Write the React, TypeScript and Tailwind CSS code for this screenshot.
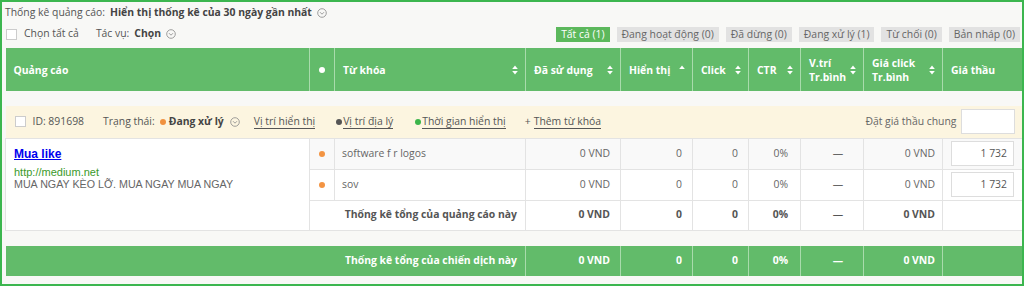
import React from "react";

const SortIcon = ({ up }: { up?: boolean }) => (
  <svg width="6" height="10" viewBox="0 0 6 10" className="shrink-0">
    <path d="M3 0.5 L5.8 4 L0.2 4 Z" fill="white" />
    {!up && <path d="M3 9.5 L5.8 6 L0.2 6 Z" fill="white" />}
  </svg>
);

const CircleDown = () => (
  <svg width="10" height="10" viewBox="0 0 10 10" className="inline-block">
    <circle cx="5" cy="5" r="4.3" fill="none" stroke="#888" strokeWidth="0.8" />
    <path d="M3 4.2 L5 6.2 L7 4.2" fill="none" stroke="#888" strokeWidth="0.8" />
  </svg>
);

const Dot = ({ color }: { color: string }) => (
  <span className={`inline-block w-[6px] h-[6px] rounded-full ${color}`} />
);

const headers: { label: React.ReactNode; sort?: "both" | "up" }[] = [
  { label: "Quảng cáo" },
  { label: <span className="block w-[6px] h-[6px] rounded-full bg-white mx-auto" /> },
  { label: "Từ khóa", sort: "both" },
  { label: "Đã sử dụng", sort: "both" },
  { label: "Hiển thị", sort: "up" },
  { label: "Click", sort: "both" },
  { label: "CTR", sort: "both" },
  { label: <>V.trí<br />Tr.bình</>, sort: "both" },
  { label: <>Giá click<br />Tr.bình</>, sort: "both" },
  { label: "Giá thầu" },
];

const widths = [304, 25, 191, 95, 72, 56, 52, 63, 79, 80];

const tabs = [
  { label: "Tất cả (1)", active: true },
  { label: "Đang hoạt động (0)" },
  { label: "Đã dừng (0)" },
  { label: "Đang xử lý (1)" },
  { label: "Từ chối (0)" },
  { label: "Bản nháp (0)" },
];

const keywords = ["software f r logos", "sov"];

export default function App() {
  return (
    <div
      className="w-[1024px] h-[286px] border-2 border-[#3cb64f] bg-[#f8f8f6] text-[10.4px] text-[#555] overflow-hidden"
      style={{ fontFamily: '"Open Sans", sans-serif' }}
    >
      {/* Top bar */}
      <div className="pl-[3px] pt-[3px] h-[18px] flex items-center gap-[5px]">
        <span>Thống kê quảng cáo:</span>
        <span className="font-bold text-[#444]">Hiển thị thống kê của 30 ngày gần nhất</span>
        <CircleDown />
      </div>
      <div className="pl-[4px] pr-[2px] h-[28px] flex items-center">
        <span className="w-[11px] h-[11px] border border-[#ccc] bg-white mr-[7px]" />
        <span>Chọn tất cả</span>
        <span className="ml-[17px]">Tác vụ:</span>
        <span className="ml-[5px] font-bold text-[#444] mr-[5px]">Chọn</span>
        <CircleDown />
        <div className="ml-auto flex gap-[7px]">
          {tabs.map((t) => (
            <span
              key={t.label}
              className={`h-[15px] leading-[15px] px-[5px] ${
                t.active ? "bg-[#5cb85c] text-white" : "bg-[#e2e2e2] text-[#666]"
              }`}
            >
              {t.label}
            </span>
          ))}
        </div>
      </div>

      <table className="ml-[3px] border-collapse table-fixed w-[1017px]">
        <colgroup>
          {widths.map((w, i) => (
            <col key={i} style={{ width: w }} />
          ))}
        </colgroup>
        <thead>
          <tr className="bg-[#62bb6a] text-white h-[43px]">
            {headers.map((h, i) => (
              <th
                key={i}
                className={`font-bold text-left align-middle leading-[14px] border-l border-[#a9dbac] first:border-l-0 ${
                  i === 1 ? "px-0 text-center" : "pl-[8px] pr-[7px]"
                }`}
              >
                <div className={`flex items-center ${i === 1 ? "justify-center" : "justify-between"}`}>
                  <span>{h.label}</span>
                  {h.sort && <SortIcon up={h.sort === "up"} />}
                </div>
              </th>
            ))}
          </tr>
        </thead>
        <tbody>
          <tr className="h-[15px]">
            <td colSpan={10} />
          </tr>
          {/* ad group bar */}
          <tr className="bg-[#fcf5e0] h-[32px]">
            <td colSpan={10} className="px-[9px]">
              <div className="flex items-center">
                <span className="w-[11px] h-[11px] border border-[#ccc] bg-white mr-[7px]" />
                <span>ID: 891698</span>
                <span className="ml-[19px]">Trạng thái:</span>
                <span className="ml-[5px] mr-[3px] flex">
                  <Dot color="bg-[#f0913f]" />
                </span>
                <span className="font-bold text-[#444] mr-[6px]">Đang xử lý</span>
                <CircleDown />
                <span className="ml-[14px] border-b border-[#555] leading-[13px]">Vị trí hiển thị</span>
                <span className="ml-[21px] mr-[1px] flex">
                  <Dot color="bg-[#555]" />
                </span>
                <span className="border-b border-[#555] leading-[13px]">Vị trí địa lý</span>
                <span className="ml-[22px] mr-[1px] flex">
                  <Dot color="bg-[#3cb54a]" />
                </span>
                <span className="border-b border-[#555] leading-[13px]">Thời gian hiển thị</span>
                <span className="ml-[19px]">+ </span>
                <span className="ml-[3px] border-b border-[#555] leading-[13px]">Thêm từ khóa</span>
                <span className="ml-auto mr-[4px] text-[#666]">Đặt giá thầu chung</span>
                <span className="w-[54px] h-[25px] bg-white border border-[#ddd] -mr-[1px]" />
              </div>
            </td>
          </tr>
          {keywords.map((k, i) => (
            <tr key={k} className={`h-[31px] ${i === 0 ? "bg-[#f9f9f9]" : "bg-white"} text-[#666]`}>
              {i === 0 && (
                <td
                  rowSpan={3}
                  className="bg-white border border-[#e3e3e3] align-top pl-[8px] pt-[8px]"
                  style={{ fontFamily: '"Liberation Sans", Arial, sans-serif' }}
                >
                  <div className="text-[12px] font-bold text-[#0000ee] underline leading-[15px]">Mua like</div>
                  <div className="mt-[4px] text-[11px] text-[#3a9a2a] leading-[12px]">http://medium.net</div>
                  <div className="text-[10.7px] text-[#666] leading-[12px]">MUA NGAY KÈO LỠ. MUA NGAY MUA NGAY</div>
                </td>
              )}
              <td className="border border-[#e3e3e3] text-center">
                <span className="flex justify-center">
                  <Dot color="bg-[#f39443]" />
                </span>
              </td>
              <td className="border border-[#e3e3e3] pl-[7px]">{k}</td>
              <td className="border border-[#e3e3e3] text-right pr-[10px]">0 VND</td>
              <td className="border border-[#e3e3e3] text-right pr-[10px]">0</td>
              <td className="border border-[#e3e3e3] text-right pr-[10px]">0</td>
              <td className="border border-[#e3e3e3] text-right pr-[12px]">0%</td>
              <td className="border border-[#e3e3e3] text-center pl-[12px]">—</td>
              <td className="border border-[#e3e3e3] text-right pr-[7px]">0 VND</td>
              <td className="border border-[#e3e3e3] pl-[8px] pr-[8px]">
                <div className="h-[25px] bg-white border border-[#ddd] text-right pr-[6px] leading-[23px] text-[#555]">
                  1 732
                </div>
              </td>
            </tr>
          ))}
          <tr className="h-[30px] bg-white font-bold text-[#555]">
            <td colSpan={2} className="border border-[#e3e3e3] text-right pr-[8px]">
              Thống kê tổng của quảng cáo này
            </td>
            <td className="border border-[#e3e3e3] text-right pr-[10px]">0 VND</td>
            <td className="border border-[#e3e3e3] text-right pr-[10px]">0</td>
            <td className="border border-[#e3e3e3] text-right pr-[10px]">0</td>
            <td className="border border-[#e3e3e3] text-right pr-[12px]">0%</td>
            <td className="border border-[#e3e3e3] text-center pl-[12px] font-normal">—</td>
            <td className="border border-[#e3e3e3] text-right pr-[7px]">0 VND</td>
            <td className="border border-[#e3e3e3]" />
          </tr>
          <tr className="h-[16px]">
            <td colSpan={10} />
          </tr>
          <tr className="h-[30px] bg-[#62bb6a] text-white font-bold">
            <td colSpan={3} className="text-right pr-[8px]">
              Thống kê tổng của chiến dịch này
            </td>
            <td className="border-l border-[#a9dbac] text-right pr-[10px]">0 VND</td>
            <td className="border-l border-[#a9dbac] text-right pr-[10px]">0</td>
            <td className="border-l border-[#a9dbac] text-right pr-[10px]">0</td>
            <td className="border-l border-[#a9dbac] text-right pr-[12px]">0%</td>
            <td className="border-l border-[#a9dbac] text-center pl-[12px]">—</td>
            <td className="border-l border-[#a9dbac] text-right pr-[7px]">0 VND</td>
            <td className="border-l border-[#a9dbac]" />
          </tr>
        </tbody>
      </table>
    </div>
  );
}
